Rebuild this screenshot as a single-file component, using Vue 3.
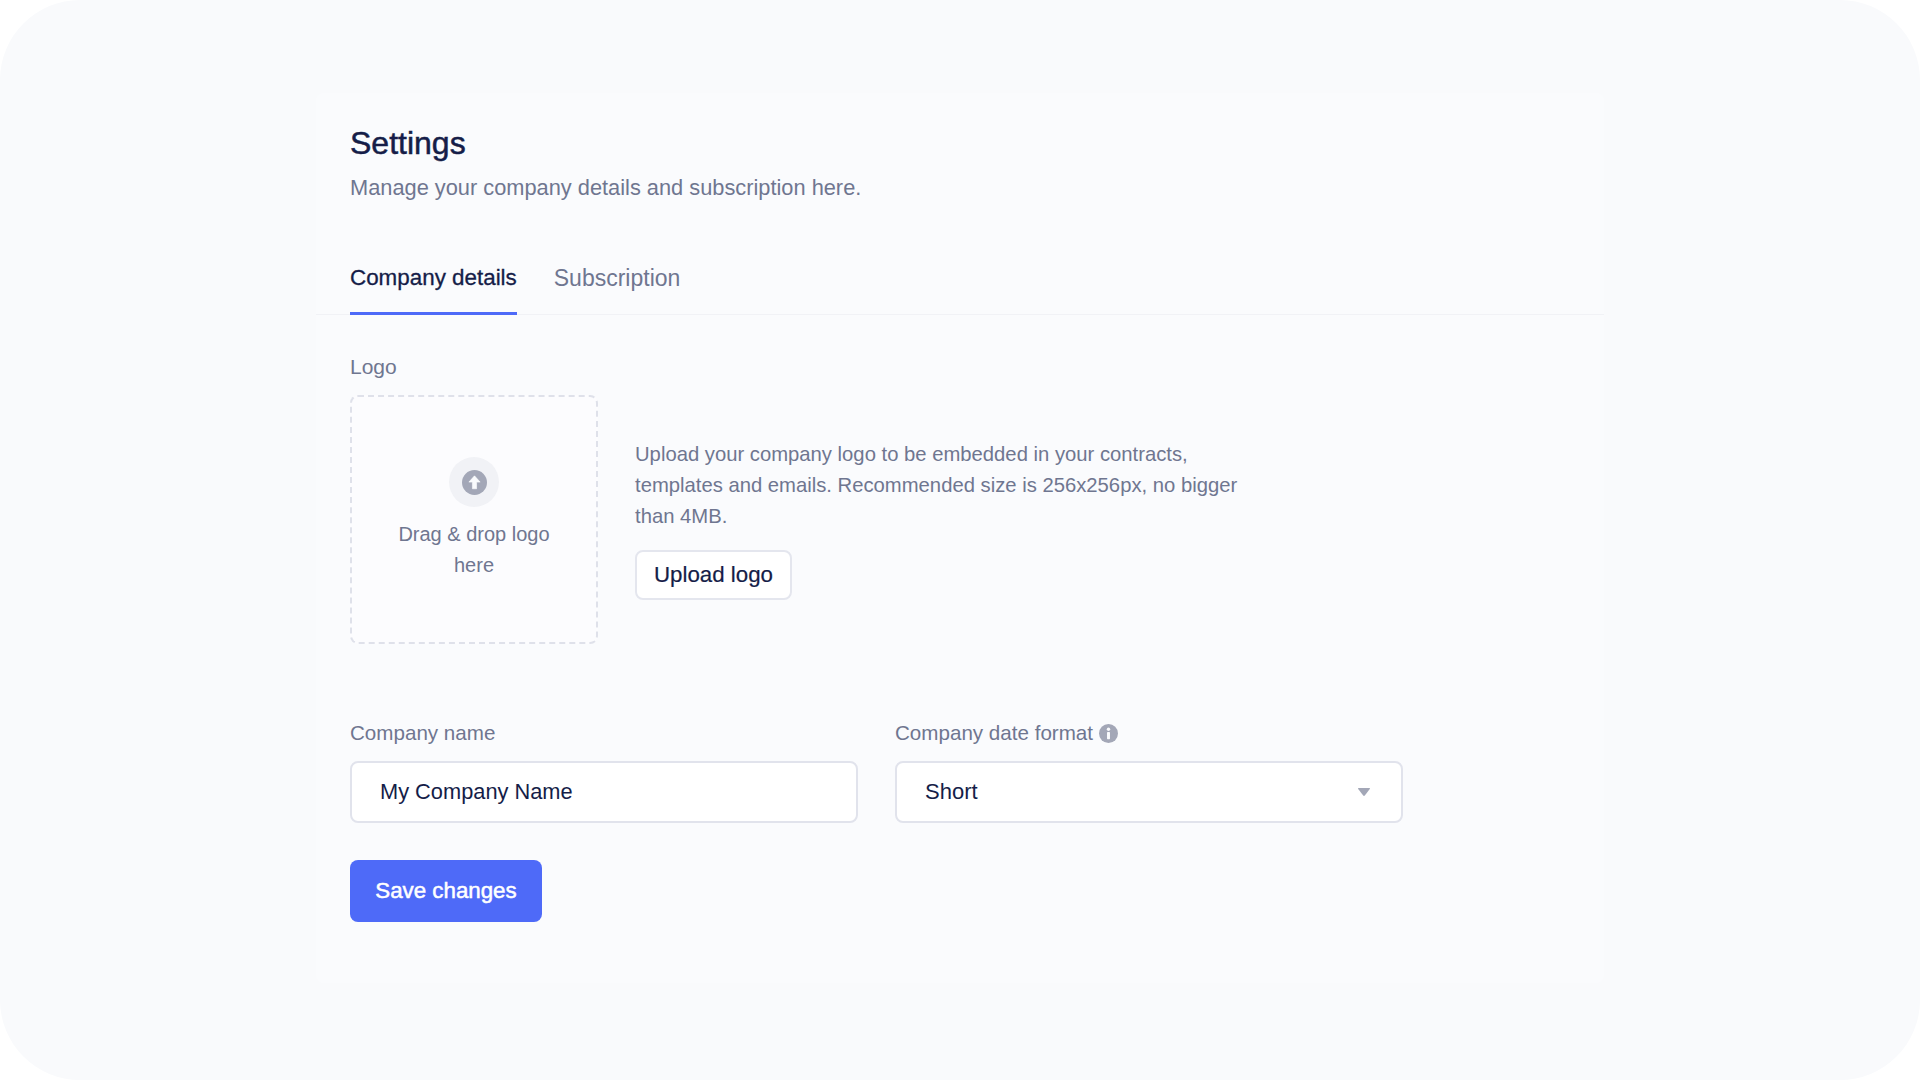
<script setup>
const tabs = [
  { label: 'Company details', active: true },
  { label: 'Subscription', active: false }
]
</script>

<template>
  <div class="page">
    <main class="card">
      <header class="head">
        <h1 class="title">Settings</h1>
        <p class="subtitle">Manage your company details and subscription here.</p>
      </header>
      <nav class="tabs">
        <a v-for="t in tabs" :key="t.label" class="tab" :class="{ active: t.active }">{{ t.label }}</a>
      </nav>
      <section class="logo-section">
        <div class="label logo-label">Logo</div>
        <div class="logo-row">
          <div class="drop">
            <span class="drop-icon">
              <svg width="25" height="25" viewBox="0 0 24 24">
                <circle cx="12" cy="12" r="12" fill="#a3a7b7" />
                <path d="M12 5.6 L17.4 11.6 H14 V18 H10 V11.6 H6.6 Z" fill="#fafbfd" stroke="#fafbfd" stroke-width="0.6" stroke-linejoin="round" />
              </svg>
            </span>
            <span class="drop-text">Drag &amp; drop logo here</span>
          </div>
          <div class="logo-info">
            <p class="info-text">Upload your company logo to be embedded in your contracts, templates and emails. Recommended size is 256x256px, no bigger than 4MB.</p>
            <button class="upload" type="button">Upload logo</button>
          </div>
        </div>
      </section>
      <section class="fields">
        <div class="field">
          <div class="label">Company name</div>
          <div class="control name">My Company Name</div>
        </div>
        <div class="field">
          <div class="label with-icon">
            Company date format
            <svg width="19" height="19" viewBox="0 0 18 18">
              <circle cx="9" cy="9" r="9" fill="#a3a7b7" />
              <circle cx="9" cy="5" r="1.6" fill="#fafbfd" />
              <rect x="7.6" y="7.6" width="2.8" height="6.8" rx="0.6" fill="#fafbfd" />
            </svg>
          </div>
          <div class="control select">
            <span>Short</span>
            <svg width="14" height="10" viewBox="0 0 14 10">
              <path d="M1.6 1 H12.4 Q13.4 1 12.8 2 L7.8 8.6 Q7 9.4 6.2 8.6 L1.2 2 Q0.6 1 1.6 1 Z" fill="#a3a7b7" />
            </svg>
          </div>
        </div>
      </section>
      <button class="save" type="button">Save changes</button>
    </main>
  </div>
</template>

<style>
html, body { margin: 0; background: #ffffff; }
</style>

<style scoped>
.page {
  width: 1920px;
  height: 1080px;
  box-sizing: border-box;
  background: #f9fafc;
  border-radius: 80px;
  padding-top: 93px;
  overflow: hidden;
  font-family: "Liberation Sans", Arial, sans-serif;
  color: #6f7690;
}
.card {
  width: 1288px;
  height: 890px;
  margin-left: 316px;
  box-sizing: border-box;
  background: #fafbfd;
  border-radius: 8px;
  padding-top: 30px;
  display: flex;
  flex-direction: column;
}
.head { padding-left: 34px; }
.title {
  margin: 0;
  font-size: 32px;
  line-height: 40px;
  font-weight: 400;
  color: #151d48;
  -webkit-text-stroke: 0.5px #151d48;
}
.subtitle {
  margin: 10px 0 0;
  font-size: 21.8px;
  line-height: 30px;
}
.tabs {
  display: flex;
  gap: 37px;
  padding-left: 34px;
  margin-top: 54px;
  border-bottom: 1px solid #f1f2f6;
}
.tab {
  height: 58px;
  box-sizing: border-box;
  padding-top: 5px;
  margin-bottom: -1px;
  font-size: 23px;
  line-height: 32px;
}
.tab.active {
  font-size: 22.4px;
  color: #151d48;
  border-bottom: 3px solid #4e6af8;
  -webkit-text-stroke: 0.3px #151d48;
}
.logo-section { padding-left: 34px; margin-top: 39px; }
.label {
  font-size: 20.6px;
  line-height: 26px;
}
.logo-label { font-size: 21px; }
.with-icon { display: flex; align-items: center; gap: 6px; }
.logo-row {
  display: flex;
  gap: 37px;
  margin-top: 15px;
}
.drop {
  width: 248px;
  height: 249px;
  box-sizing: border-box;
  border: 2px dashed #dfe1ea;
  border-radius: 8px;
  background: #fcfcfe;
  display: flex;
  flex-direction: column;
  align-items: center;
  padding: 60px 30px 0;
}
.drop-icon {
  width: 50px;
  height: 50px;
  border-radius: 50%;
  background: #f1f2f6;
  display: flex;
  align-items: center;
  justify-content: center;
}
.drop-text {
  margin-top: 12px;
  text-align: center;
  font-size: 20px;
  line-height: 31px;
}
.logo-info {
  width: 622px;
  padding-top: 44px;
}
.info-text {
  margin: 0;
  font-size: 20.25px;
  line-height: 31px;
}
.upload {
  display: block;
  margin-top: 18px;
  width: 157px;
  height: 50px;
  padding: 0;
  background: #fff;
  border: 2px solid #e4e6ee;
  border-radius: 8px;
  font: inherit;
  font-size: 22.3px;
  color: #151d48;
  -webkit-text-stroke: 0.2px #151d48;
}
.fields {
  display: flex;
  gap: 37px;
  padding-left: 34px;
  margin-top: 76px;
}
.field { width: 508px; }
.control {
  margin-top: 15px;
  height: 62px;
  box-sizing: border-box;
  background: #fff;
  border: 2px solid #e1e3ec;
  border-radius: 8px;
  padding: 0 30px 0 28px;
  display: flex;
  align-items: center;
  font-size: 22px;
  color: #151d48;
}
.name { font-size: 21.8px; }
.select { justify-content: space-between; }
.save {
  margin: 37px 0 0 34px;
  width: 192px;
  height: 62px;
  padding: 0;
  background: #4e6af8;
  border: 0;
  border-radius: 8px;
  font: inherit;
  font-size: 22.3px;
  color: #fff;
  -webkit-text-stroke: 0.5px #fff;
}
</style>
